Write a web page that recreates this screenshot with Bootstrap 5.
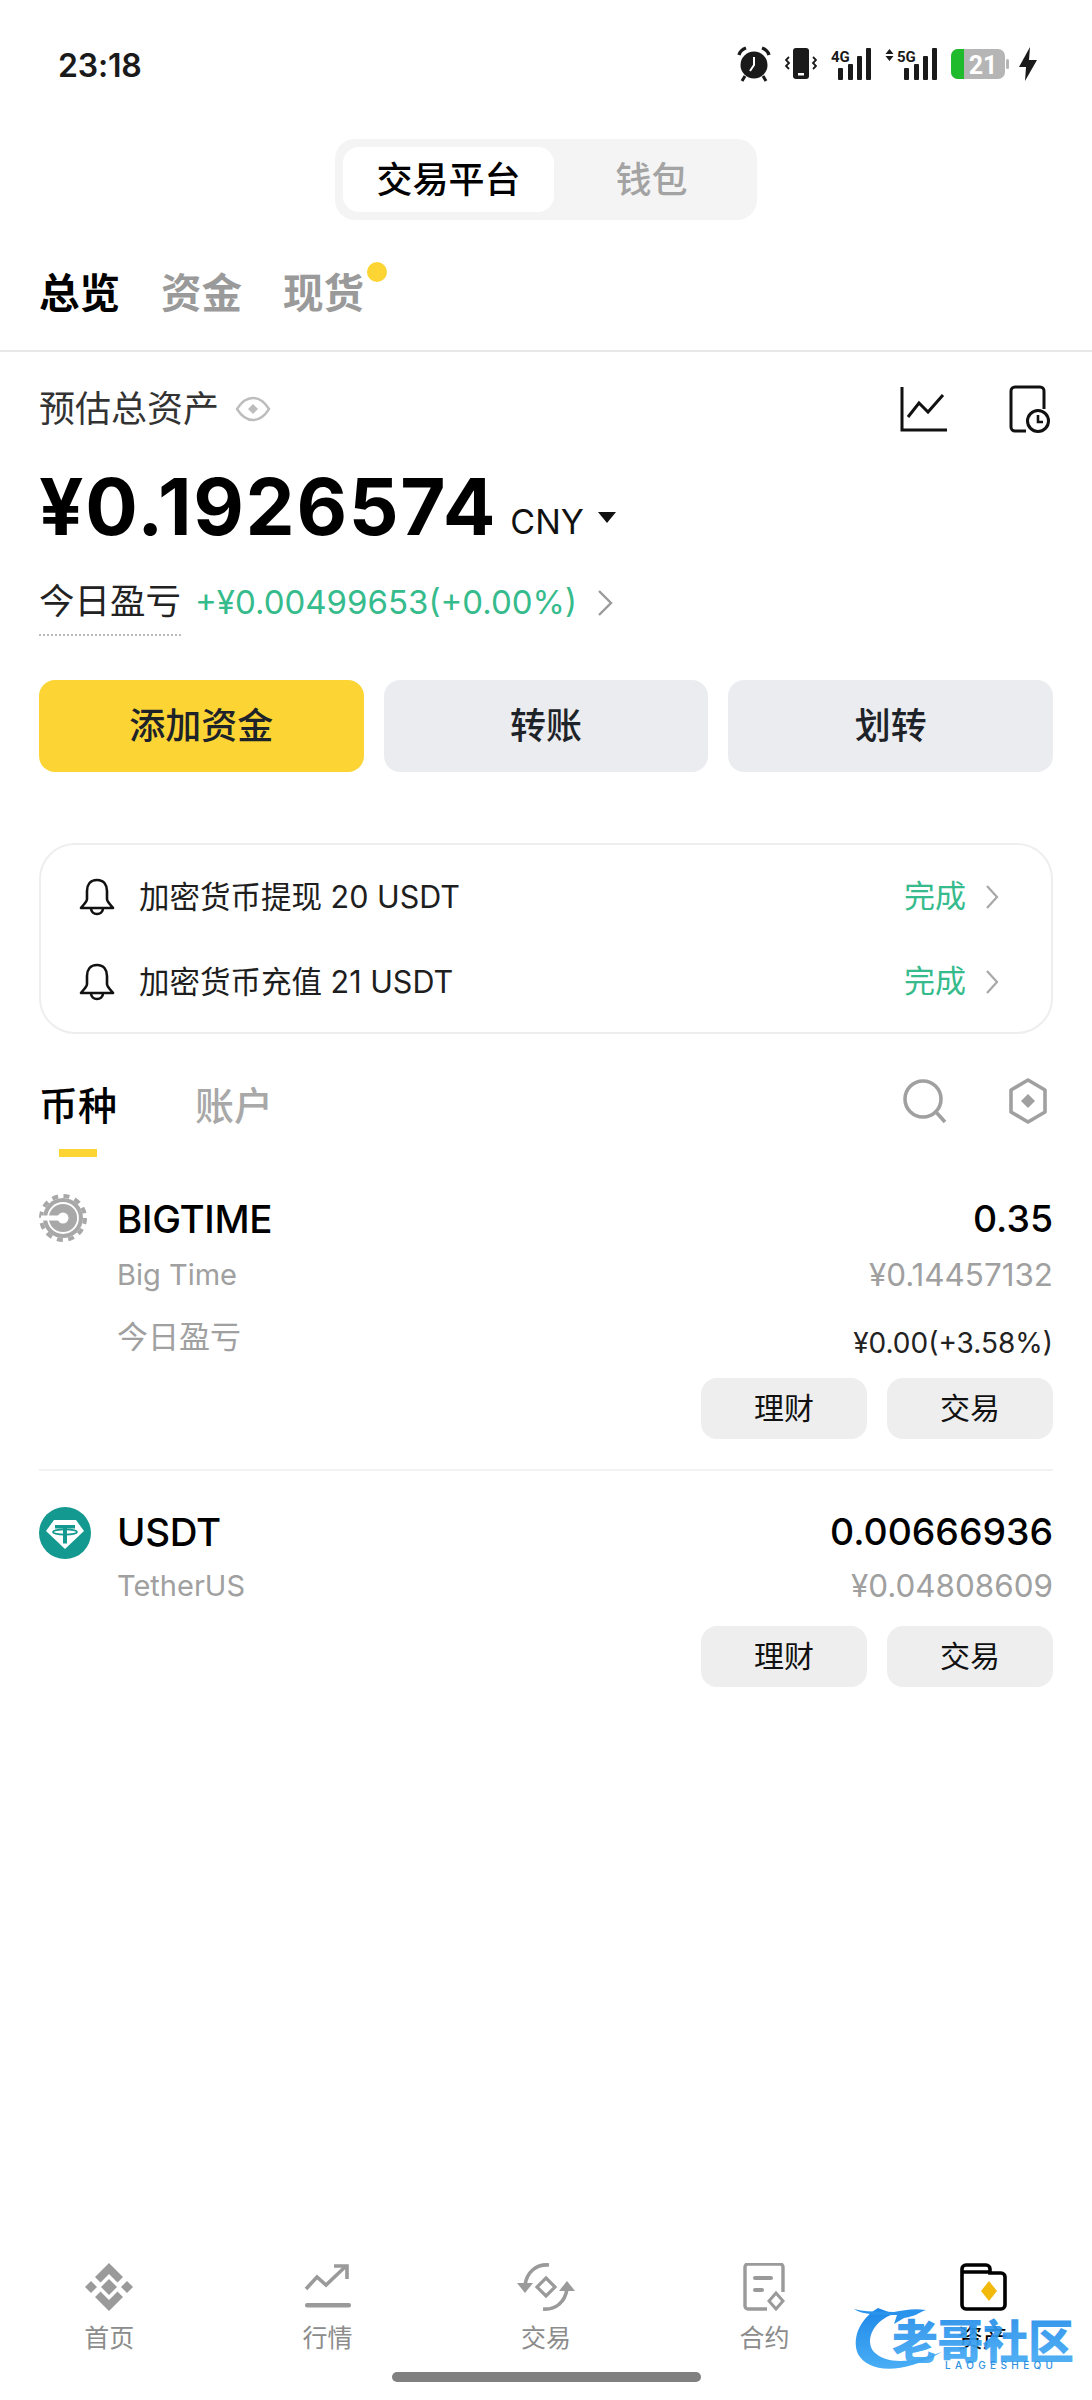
<!DOCTYPE html>
<html lang="zh">
<head>
<meta charset="utf-8">
<title>资产</title>
<link href="https://cdn.jsdelivr.net/npm/bootstrap@5.3.0/dist/css/bootstrap.min.css" rel="stylesheet">
<style>
body{margin:0;background:#fff;color:#000;font-family:Inter,"Noto Sans CJK SC",sans-serif}
.page{width:1092px;height:2400px;position:relative;overflow:hidden}
.sbar{height:128px;padding:0 54px 0 58px}
.clock{font-size:32px;font-weight:600;color:#1a1a1a;letter-spacing:-.2px;padding-top:3px}
.sic{gap:14px}
.sic text{font-family:Roboto,sans-serif;font-weight:700;fill:#1a1a1a}
.sic .batt-t{fill:#fff}
.bolt{margin-left:-5px}
.seg{margin-top:11px}
.seg-box{width:422px;height:81px;background:#f4f4f4;border-radius:20px;padding:8px}
.seg-on,.seg-off{font-size:36px;line-height:66px;text-align:center}
.seg-on{width:211px;background:#fff;border-radius:16px;color:#000;font-weight:500}
.seg-off{flex:1;color:#a3a3a3;font-weight:500}
.tabs1{height:132px;padding:50px 39px 0;border-bottom:2px solid #e8e8e8;gap:41px}
.tabs1 span{font-size:40.5px;line-height:48px;font-weight:700;color:#9a9a9a;position:relative}
.tabs1 .cur{color:#000}
.dot-new{position:absolute;top:-8px;right:-23px;width:20px;height:20px;border-radius:50%;background:#fcd535}
.wrap{padding:0 39px}
.lab-row{margin-top:33px;height:48px}
.lab{font-size:36px;color:#333}
.tools{margin-right:2px}
.tool-2{margin-left:59px}
.amt-row{margin-top:29px;height:90px}
.amt{font-size:78px;font-weight:700;line-height:90px;letter-spacing:1.7px}
.cny{font-size:34px;margin-left:13px;color:#111;padding-top:28px}
.tri{width:0;height:0;border-left:9px solid transparent;border-right:9px solid transparent;border-top:11px solid #111;margin:20px 0 0 14px}
.pnl-row{margin-top:28px;height:56px}
.pnl-lab{font-size:35.5px;line-height:44px;height:56px;color:#222;border-bottom:2px dotted #bbb;white-space:nowrap}
.pnl-val{font-size:33px;line-height:44px;color:#36bb8c;margin-left:14px;white-space:nowrap}
.pnl-ch{margin:8px 0 0 20px}
.act-row{margin-top:44px;gap:20px}
.act{flex:1;height:92px;border-radius:16px;border:0;font-size:36px;font-weight:500;line-height:92px;padding:0;color:#1e2329;background:#eaecef}
.act-pri,.act-pri:hover{background:#fcd535;color:#1e2329}
.note{margin-top:71px;height:191px;border:2px solid #eee;border-radius:36px;padding:9px 52px 0 38px}
.note-row{height:85px;gap:24px}
.note-t{font-size:30.5px;color:#1e1e1e}
.note-s{font-size:31px;color:#36bb8c}
.note-ch{margin-left:-5px}
.tabs2{margin-top:44px;height:79px}
.tab2{font-size:39px;line-height:56px;color:#a8a8a8;font-weight:500}
.tab2.cur{color:#000}
.tab2-bar{width:38px;height:8px;background:#fcd535;margin:15px auto 0}
.tab2-gap{margin-left:78px}
.tools2{margin-right:5px}
.tool2-2{margin-left:60px}
.tok{margin-top:37px}
.tok2{margin-top:36px}
.tok-ic{width:78px;flex:none}
.t-name{font-size:38.5px;line-height:50px;font-weight:500;letter-spacing:-.3px}
.t-num{font-size:37.4px;line-height:50px;font-weight:500}
.t-sub{font-size:29px;line-height:40px;color:#a0a0a0;margin-top:11px}
.t-sub2{margin-top:9px}
.t-val{font-size:31.4px}
.t-pnl{font-size:31px;line-height:40px;color:#a0a0a0;margin-top:25px}
.t-pnl-l{position:relative;top:-3px}
.t-pnl-v{color:#222;font-size:28px;position:relative;top:3px}
.t-btns{gap:20px;margin-top:18px}
.t-btns2{margin-top:20px}
.t-btn{width:166px;height:61px;border:0;border-radius:16px;background:#eee;color:#111;font-size:30px;line-height:61px;padding:0}
.sep{height:2px;background:#f2f2f2;margin-top:30px}
.bnav{margin-top:auto}
.bn-i{flex:1 1 0;text-align:center}
.bn-i svg{display:block;margin:0 auto}
.bn-l{font-size:25px;line-height:30px;color:#8c8c8c;margin-top:12px}
.bn-l.cur{color:#000}
.hbar{width:309px;height:10px;border-radius:5px;background:#808080;margin:19px auto 18px}
.wm{position:absolute;left:850px;top:2300px}
</style>
</head>
<body>
<div class="page d-flex flex-column">

  <div class="sbar d-flex align-items-center justify-content-between">
    <div class="clock">23:18</div>
    <div class="d-flex align-items-center sic">
      <svg width="34" height="36" viewBox="0 0 34 36"><circle cx="17" cy="19" r="13.5" fill="#1a1a1a"/><path d="M17 11v8l-4 6" stroke="#fff" stroke-width="2" fill="none"/><path d="M2 9c1-4 4-6 7-7M32 9c-1-4-4-6-7-7" stroke="#1a1a1a" stroke-width="3.4" fill="none"/><path d="M8 30l-3 5M26 30l3 5" stroke="#1a1a1a" stroke-width="3"/></svg>
      <svg width="32" height="34" viewBox="0 0 32 34"><rect x="8" y="1" width="16" height="31" rx="3" fill="#1a1a1a"/><rect x="13" y="26" width="6" height="2.5" fill="#fff"/><path d="M4 10l-3 3 3 3-3 3 3 3M28 10l3 3-3 3 3 3-3 3" stroke="#1a1a1a" stroke-width="1.8" fill="none"/></svg>
      <svg width="40" height="36" viewBox="0 0 40 36"><text x="0" y="16" font-size="15">4G</text><g fill="#1a1a1a"><rect x="7" y="22" width="5" height="12" rx="1"/><rect x="17" y="18" width="5" height="16" rx="1"/><rect x="26" y="10" width="5" height="24" rx="1"/><rect x="35" y="2" width="5" height="32" rx="1"/></g></svg>
      <svg width="52" height="36" viewBox="0 0 52 36"><path d="M4.5 3l4 5H.5zM4.5 15l4-5H.5z" fill="#1a1a1a"/><text x="12" y="16" font-size="15">5G</text><g fill="#1a1a1a"><rect x="19" y="22" width="5" height="12" rx="1"/><rect x="29" y="18" width="5" height="16" rx="1"/><rect x="38" y="10" width="5" height="24" rx="1"/><rect x="47" y="2" width="5" height="32" rx="1"/></g></svg>
      <svg width="58" height="32" viewBox="0 0 58 32"><rect x="0" y="1" width="54" height="30" rx="7" fill="#b5b5b5"/><path d="M7 1h6v30H7a7 7 0 0 1-7-7V8a7 7 0 0 1 7-7z" fill="#1fbb2c"/><rect x="55" y="11" width="3" height="10" rx="1.5" fill="#b5b5b5"/><text class="batt-t" x="32" y="26" text-anchor="middle" font-size="25">21</text></svg>
      <svg class="bolt" width="20" height="34" viewBox="0 0 20 34"><path d="M12 0L1 20h7l-1 14L19 13h-8z" fill="#1a1a1a"/></svg>
    </div>
  </div>

  <div class="seg d-flex justify-content-center">
    <div class="seg-box d-flex">
      <div class="seg-on">交易平台</div>
      <div class="seg-off">钱包</div>
    </div>
  </div>

  <div class="tabs1 d-flex">
    <span class="cur">总览</span><span>资金</span><span>现货<i class="dot-new"></i></span>
  </div>

  <div class="wrap">
    <div class="lab-row d-flex align-items-center">
      <span class="lab">预估总资产</span>
      <svg class="ms-3" width="36" height="28" viewBox="0 0 36 28"><path d="M2 14C7 6 12 3 18 3s11 3 16 11c-5 8-10 11-16 11S7 22 2 14z" fill="none" stroke="#bdbdbd" stroke-width="2.4"/><path d="M18 9l5 5-5 5-5-5z" fill="#bdbdbd"/></svg>
      <div class="ms-auto d-flex align-items-center tools">
        <svg width="48" height="48" viewBox="0 0 48 48"><path d="M2 2v43h45" fill="none" stroke="#111" stroke-width="3"/><path d="M8 32l11-14 9 9 15-17" fill="none" stroke="#111" stroke-width="3"/></svg>
        <svg class="tool-2" width="44" height="48" viewBox="0 0 44 48"><path d="M19 46H8a4 4 0 0 1-4-4V6a4 4 0 0 1 4-4h25a4 4 0 0 1 4 4v18" fill="none" stroke="#111" stroke-width="3"/><circle cx="31" cy="36" r="10.5" fill="#fff" stroke="#111" stroke-width="3"/><path d="M31 30v7h5" fill="none" stroke="#111" stroke-width="2.6"/></svg>
      </div>
    </div>

    <div class="amt-row d-flex align-items-center">
      <span class="amt">¥0.1926574</span><span class="cny">CNY</span><i class="tri"></i>
    </div>

    <div class="pnl-row d-flex align-items-start">
      <span class="pnl-lab">今日盈亏</span>
      <span class="pnl-val">+¥0.00499653(+0.00%)</span>
      <svg class="pnl-ch" width="16" height="30" viewBox="0 0 16 30"><path d="M2 3l12 12L2 27" fill="none" stroke="#9a9a9a" stroke-width="2.4"/></svg>
    </div>

    <div class="act-row d-flex">
      <button class="btn act act-pri" type="button">添加资金</button>
      <button class="btn act" type="button">转账</button>
      <button class="btn act" type="button">划转</button>
    </div>

    <div class="note">
      <div class="note-row d-flex align-items-center">
        <svg width="36" height="38" viewBox="0 0 36 38"><path d="M18 2c-7 0-10 5-10 11v8c0 3-4 6-6 9h32c-2-3-6-6-6-9v-8c0-6-3-11-10-11z" fill="none" stroke="#111" stroke-width="2.6" stroke-linejoin="round"/><path d="M12 30c0 4 3 6 6 6s6-2 6-6" fill="none" stroke="#111" stroke-width="2.6"/></svg>
        <span class="note-t">加密货币提现 20 USDT</span>
        <span class="note-s ms-auto">完成</span>
        <svg class="note-ch" width="14" height="28" viewBox="0 0 14 28"><path d="M2 3l10 11L2 25" fill="none" stroke="#a8a8a8" stroke-width="2.2"/></svg>
      </div>
      <div class="note-row d-flex align-items-center">
        <svg width="36" height="38" viewBox="0 0 36 38"><path d="M18 2c-7 0-10 5-10 11v8c0 3-4 6-6 9h32c-2-3-6-6-6-9v-8c0-6-3-11-10-11z" fill="none" stroke="#111" stroke-width="2.6" stroke-linejoin="round"/><path d="M12 30c0 4 3 6 6 6s6-2 6-6" fill="none" stroke="#111" stroke-width="2.6"/></svg>
        <span class="note-t">加密货币充值 21 USDT</span>
        <span class="note-s ms-auto">完成</span>
        <svg class="note-ch" width="14" height="28" viewBox="0 0 14 28"><path d="M2 3l10 11L2 25" fill="none" stroke="#a8a8a8" stroke-width="2.2"/></svg>
      </div>
    </div>

    <div class="tabs2 d-flex align-items-start">
      <div><div class="tab2 cur">币种</div><div class="tab2-bar"></div></div>
      <div class="tab2 tab2-gap">账户</div>
      <div class="ms-auto d-flex align-items-center tools2">
        <svg width="46" height="46" viewBox="0 0 46 46"><circle cx="21" cy="21" r="18" fill="none" stroke="#a0a0a0" stroke-width="3.6"/><path d="M34 34l9 10" stroke="#a0a0a0" stroke-width="3.6"/></svg>
        <svg class="tool2-2" width="40" height="46" viewBox="0 0 40 46"><path d="M20 2l17 10v22L20 44 3 34V12z" fill="none" stroke="#a0a0a0" stroke-width="3.6" stroke-linejoin="round"/><path d="M20 16l7 7-7 7-7-7z" fill="#a0a0a0"/></svg>
      </div>
    </div>

    <div class="tok d-flex">
      <div class="tok-ic">
        <svg width="48" height="48" viewBox="0 0 48 48"><circle cx="24" cy="24" r="22" fill="none" stroke="#a8a8a8" stroke-width="4" stroke-dasharray="6 5.5"/><circle cx="24" cy="24" r="20" fill="#a8a8a8"/><circle cx="24" cy="24" r="15" fill="none" stroke="#fff" stroke-width="1.8"/><circle cx="24" cy="24" r="5.5" fill="#fff"/><rect x="2" y="21.5" width="22" height="5" fill="#fff"/></svg>
      </div>
      <div class="flex-grow-1">
        <div class="d-flex justify-content-between"><span class="t-name">BIGTIME</span><span class="t-num">0.35</span></div>
        <div class="d-flex justify-content-between align-items-center t-sub"><span>Big Time</span><span class="t-val">¥0.14457132</span></div>
        <div class="d-flex justify-content-between t-pnl"><span class="t-pnl-l">今日盈亏</span><span class="t-pnl-v">¥0.00(+3.58%)</span></div>
        <div class="d-flex justify-content-end t-btns"><button class="btn t-btn" type="button">理财</button><button class="btn t-btn" type="button">交易</button></div>
      </div>
    </div>

    <div class="sep"></div>

    <div class="tok2 d-flex">
      <div class="tok-ic">
        <svg width="52" height="52" viewBox="0 0 52 52"><circle cx="26" cy="26" r="26" fill="#13998f"/><path d="M15 13h22l8 11-19 18L7 24z" fill="#fff"/><path d="M16 18h20v3.5h-8v15h-4v-15h-8z" fill="#13998f"/><ellipse cx="26" cy="25" rx="12" ry="2.6" fill="none" stroke="#13998f" stroke-width="1.8"/></svg>
      </div>
      <div class="flex-grow-1">
        <div class="d-flex justify-content-between"><span class="t-name">USDT</span><span class="t-num">0.00666936</span></div>
        <div class="d-flex justify-content-between align-items-center t-sub t-sub2"><span>TetherUS</span><span class="t-val">¥0.04808609</span></div>
        <div class="d-flex justify-content-end t-btns t-btns2"><button class="btn t-btn" type="button">理财</button><button class="btn t-btn" type="button">交易</button></div>
      </div>
    </div>
  </div>

  <div class="bnav">
    <div class="d-flex">
      <div class="bn-i">
        <svg width="48" height="48" viewBox="0 0 48 48"><g fill="#9a9a9a"><path d="M24 0l14 14-5.5 5.5L24 11l-8.5 8.5L10 14z"/><path d="M24 48L10 34l5.5-5.5L24 37l8.500-8.500L38 34z"/><path d="M24 16l8 8-8 8-8-8z"/><path d="M6 18l6 6-6 6-6-6z"/><path d="M42 18l6 6-6 6-6-6z"/></g></svg>
        <div class="bn-l">首页</div>
      </div>
      <div class="bn-i">
        <svg width="48" height="48" viewBox="0 0 48 48"><path d="M2 26l11-12 9 8L41 4" fill="none" stroke="#9a9a9a" stroke-width="3.6"/><path d="M30 3h13v13" fill="none" stroke="#9a9a9a" stroke-width="3.6"/><rect x="1" y="40" width="46" height="4.5" rx="2" fill="#9a9a9a"/></svg>
        <div class="bn-l">行情</div>
      </div>
      <div class="bn-i">
        <svg width="60" height="48" viewBox="0 0 60 48"><path d="M33 2C20 1 11 9 9 22" fill="none" stroke="#9a9a9a" stroke-width="3.6"/><path d="M1 20l8 10 8-10z" fill="#9a9a9a"/><path d="M27 46c13 1 22-7 24-20" fill="none" stroke="#9a9a9a" stroke-width="3.6"/><path d="M43 28l8-10 8 10z" fill="#9a9a9a"/><path d="M30 15l9 9-9 9-9-9z" fill="none" stroke="#9a9a9a" stroke-width="3.2"/></svg>
        <div class="bn-l">交易</div>
      </div>
      <div class="bn-i">
        <svg width="42" height="48" viewBox="0 0 42 48"><path d="M24 46H5a3 3 0 0 1-3-3V4a3 3 0 0 1 3-3h32a3 3 0 0 1 3 3v25" fill="none" stroke="#9a9a9a" stroke-width="3.4"/><rect x="10" y="13" width="20" height="4" rx="2" fill="#9a9a9a"/><rect x="10" y="25" width="11" height="4" rx="2" fill="#9a9a9a"/><path d="M33 30l7 8-7 8-7-8z" fill="none" stroke="#9a9a9a" stroke-width="3"/></svg>
        <div class="bn-l">合约</div>
      </div>
      <div class="bn-i">
        <svg width="48" height="48" viewBox="0 0 48 48"><path d="M3 9V6a4 4 0 0 1 4-4h20a4 4 0 0 1 4 4v4h11a4 4 0 0 1 4 4v28a4 4 0 0 1-4 4H7a4 4 0 0 1-4-4V9h28" fill="none" stroke="#000" stroke-width="3.6"/><path d="M30 18l8 10-8 10-8-10z" fill="#f0b90b"/></svg>
        <div class="bn-l cur">资产</div>
      </div>
    </div>
    <div class="hbar"></div>
  </div>

  <svg class="wm" width="232" height="80" viewBox="0 0 232 80">
    <defs><linearGradient id="wg" x1="0" y1="0" x2="0" y2="1"><stop offset="0" stop-color="#1e88e8"/><stop offset="1" stop-color="#49aef5"/></linearGradient></defs>
    <path d="M28 8C8 20 2 40 8 54c10 18 42 22 84-2-32 12-56 12-68 0C14 40 24 20 44 14z" fill="url(#wg)"/>
    <path d="M4 9c14 4 26 2 40 3 10-2 20-4 32-2-8 3-10 6-22 8l-10 6 3-9C30 15 12 15 4 9z" fill="#2a93ec"/>
    <text x="42" y="58" font-family="'Noto Sans CJK SC',sans-serif" font-size="46" font-weight="900" fill="url(#wg)" textLength="182" lengthAdjust="spacing" opacity=".92">老哥社区</text>
    <text x="95" y="69" font-family="Inter,sans-serif" font-size="10" font-weight="500" fill="#2d8fe0" textLength="108">LAOGESHEQU</text>
  </svg>
</div>
<script src="https://cdn.jsdelivr.net/npm/bootstrap@5.3.0/dist/js/bootstrap.bundle.min.js"></script>
</body>
</html>
